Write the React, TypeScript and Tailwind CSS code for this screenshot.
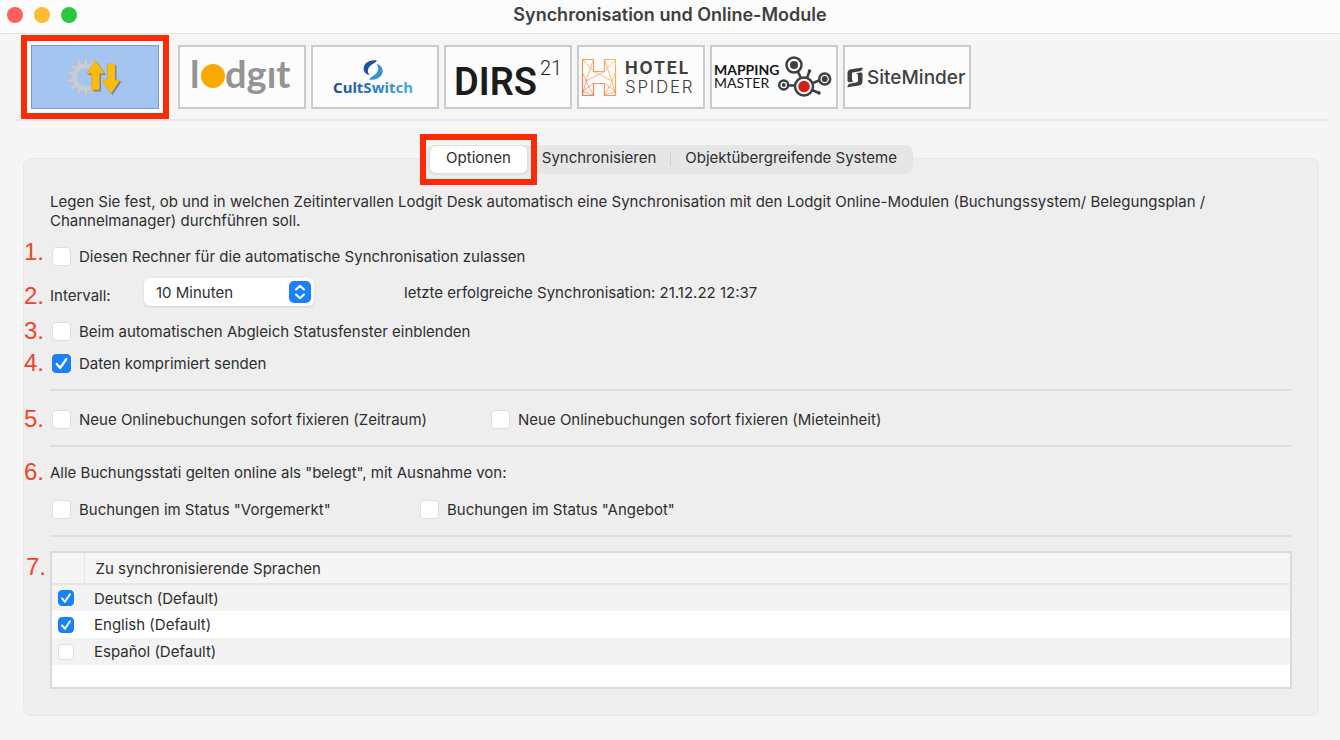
import React from 'react';

const GearArrows = () => {
  const teeth = Array.from({ length: 14 }, (_, i) => (i * 360) / 14);
  return (
    <svg viewBox="1 1 126 62" className="w-full h-full" aria-hidden="true">
      <g fill="#c9ccd2" stroke="#aeb4be" strokeWidth="0.5">
        {teeth.map((angle) => (
          <path key={angle} d="M52.8 19.5 L53.7 13.2 H56.3 L57.2 19.5 Z" transform={`rotate(${angle} 55 32)`} />
        ))}
      </g>
      <circle cx="55" cy="32" r="11.5" fill="none" stroke="#c9ccd2" strokeWidth="4.5" />
      <g fill="#4b5f80" opacity="0.6" transform="translate(1.5 1.5)">
        <path d="M64.500 15.500 L73.500 28.500 H68.500 V45 H60.500 V28.500 H55.500 Z" />
        <path d="M80 48.500 L71 35 H76.500 V19 H84 V35 H89 Z" />
      </g>
      <g fill="#fcbc0c" stroke="#c99a2a" strokeWidth="0.5">
        <path d="M64.500 15.500 L73.500 28.500 H68.500 V45 H60.500 V28.500 H55.500 Z" />
        <path d="M80 48.500 L71 35 H76.500 V19 H84 V35 H89 Z" />
      </g>
    </svg>
  );
};

const LodgitLogo = () => (
  <svg viewBox="2 2 124 60" className="w-full h-full font-['Lato',sans-serif] font-bold" fill="#949494">
    <text x="12" y="43" fontSize="38">l</text>
    <circle cx="35" cy="31" r="12" fill="#fba800" />
    <text x="47" y="43" fontSize="38">dgıt</text>
  </svg>
);

const CultSwitchLogo = () => (
  <svg viewBox="2 2 124 60" className="w-full h-full font-['Noto_Sans',sans-serif] font-bold">
    <defs>
      <linearGradient id="cult" x1="0" x2="1">
        <stop offset="0" stopColor="#1d4796" />
        <stop offset="0.45" stopColor="#2878bd" />
        <stop offset="1" stopColor="#49ade0" />
      </linearGradient>
    </defs>
    <path d="M66 15.500 C57 14 51 20 53 26 C54 28.500 56 29.500 58.500 30 C55.500 26 57 22 61 19.500 C63 18.200 65 17.500 66 15.500 Z" fill="#1f4f9f" />
    <path d="M58 34.500 C67 36 74 30 71 23 C70 20.500 68 19.500 65.500 19 C68.500 23 67.500 27 63.500 30 C61.500 31.500 59 32.500 58 34.500 Z" fill="#3793cf" />
    <text x="22" y="48" fontSize="15" fill="url(#cult)">CultSwitch</text>
  </svg>
);

const DirsLogo = () => (
  <svg viewBox="2 2 124 60" className="w-full h-full font-['Roboto',sans-serif]" fill="#1c1c1c">
    <text x="10" y="50" fontSize="38" className="font-semibold">DIRS</text>
    <text x="96" y="30" fontSize="20" className="font-light">21</text>
  </svg>
);

const HotelSpiderLogo = () => (
  <svg viewBox="2 2 124 60" className="w-full h-full font-['Inter',sans-serif]" fill="#3f3f41">
    <defs>
      <linearGradient id="spider" x1="0" y1="1" x2="1" y2="0">
        <stop offset="0" stopColor="#ee7a5a" />
        <stop offset="1" stopColor="#f8bf55" />
      </linearGradient>
    </defs>
    <g fill="none" stroke="url(#spider)">
      <path d="M5.500 14.500 H16.500 V26.500 H27.500 V14.500 H38.500 V50.500 H27.500 V38.500 H16.500 V50.500 H5.500 Z" strokeWidth="1.200" />
      <path
        d="M5.500 14.500 L16.500 26.500 M16.500 14.500 L9 36 L5.500 50.500 M9 36 L16.500 50.500 M9 36 L27.500 26.500 M9 36 L5.500 28 M16.500 38.500 L5.500 46 L16.500 50.500 M38.500 14.500 L27.500 26.500 M27.500 14.500 L35 36 L38.500 50.500 M35 36 L27.500 50.500 M35 36 L16.500 26.500 M35 36 L38.500 28 M27.500 38.500 L38.500 46 L27.500 50.500"
        strokeWidth="0.700"
      />
    </g>
    <text x="48" y="29" fontSize="17" className="font-bold tracking-widest">HOTEL</text>
    <text x="48" y="48" fontSize="17" className="font-light tracking-widest">SPIDER</text>
  </svg>
);

const MappingMasterLogo = () => (
  <svg viewBox="2 2 124 60" className="w-full h-full font-['Lato',sans-serif]" fill="#161616">
    <text x="4" y="30" fontSize="14" className="font-bold">MAPPING</text>
    <text x="4" y="43" fontSize="14">MASTER</text>
    <g stroke="#3d4043" strokeWidth="2.500" fill="none">
      <path d="M88 27 L91 33 M79 40.500 H84 M103 38 L109 35.500 M97 33 L99.500 26 M102 45 L109 48" />
      <circle cx="84" cy="20" r="7.500" />
      <circle cx="94" cy="41.500" r="9" />
      <circle cx="73.700" cy="40" r="4.500" />
      <circle cx="114.700" cy="34" r="5.500" />
    </g>
    <g fill="#3d4043">
      <circle cx="84" cy="20" r="4" />
      <circle cx="73.700" cy="40" r="2" />
      <circle cx="114.700" cy="34" r="3" />
      <circle cx="99.500" cy="26" r="1.800" />
      <circle cx="109" cy="48" r="1.800" />
    </g>
    <circle cx="94" cy="41.500" r="5.800" fill="#d0201a" />
  </svg>
);

const SiteMinderLogo = () => (
  <svg viewBox="2 2 124 60" className="w-full h-full font-['Inter',sans-serif]" fill="#404144">
    <path d="M19.500 22.500 L8 24.200 C5.500 24.600 4.500 26 4.500 28 V35 C4.500 36.500 5.200 37.300 7 37.200 L10.500 36.800 C9.500 36.300 9 35.500 9 34.500 V29 C9 28 9.300 27.500 10.500 27.300 L17 26.200 C19 25.800 19.500 24.500 19.500 22.500 Z" />
    <path d="M12.500 28.200 L17.500 27.500 C19 27.400 19.500 28 19.500 29.500 V36 C19.500 38.500 18.500 40 16 40.400 L4.500 42.200 C4.500 40 5.500 38.900 7.500 38.500 L13 37.600 C14.500 37.300 15 36.800 15 35.500 V30.500 C15 29.200 14.200 28.500 12.500 28.200 Z" />
    <text x="24" y="39" fontSize="19" className="font-medium">SiteMinder</text>
  </svg>
);

const modules = [
  { name: 'Lodgit', Logo: LodgitLogo },
  { name: 'CultSwitch', Logo: CultSwitchLogo },
  { name: 'DIRS21', Logo: DirsLogo },
  { name: 'Hotel Spider', Logo: HotelSpiderLogo },
  { name: 'Mapping Master', Logo: MappingMasterLogo },
  { name: 'SiteMinder', Logo: SiteMinderLogo },
];

const languages = [
  { id: 'de', name: 'Deutsch (Default)', checked: true },
  { id: 'en', name: 'English (Default)', checked: true },
  { id: 'es', name: 'Español (Default)', checked: false },
];

type TickProps = {
  id: string;
  checked?: boolean;
  small?: boolean;
};

const Tick: React.FC<TickProps> = ({ id, checked = false, small = false }) => (
  <span className={`grid shrink-0 ${small ? 'size-4' : 'size-[19px]'}`}>
    <input
      id={id}
      type="checkbox"
      defaultChecked={checked}
      className="peer [grid-area:1/1] size-full appearance-none rounded-[4px] border border-[#dfdfdf] bg-white checked:border-[#1a7df0] checked:bg-[#1a82f7]"
    />
    <svg
      viewBox="0 0 18 18"
      className="[grid-area:1/1] size-full pointer-events-none invisible peer-checked:visible"
      fill="none"
      stroke="white"
      strokeWidth="2.200"
      strokeLinecap="round"
      strokeLinejoin="round"
    >
      <path d="M4.500 9.500 L7.800 13.200 L13.500 4.800" />
    </svg>
  </span>
);

type OptionProps = {
  id: string;
  label: string;
  checked?: boolean;
  className?: string;
};

const Option: React.FC<OptionProps> = ({ id, label, checked, className = '' }) => (
  <div className={`flex items-center gap-2 pl-0.5 ${className}`}>
    <Tick id={id} checked={checked} />
    <label htmlFor={id}>{label}</label>
  </div>
);

type RowProps = {
  step?: string;
  align?: string;
  className?: string;
  children: React.ReactNode;
};

const Row: React.FC<RowProps> = ({ step, align = 'self-center', className = '', children }) => (
  <div className={`flex min-h-7 ${className}`}>
    <span className={`w-[26px] shrink-0 font-['Liberation_Sans',sans-serif] text-2xl leading-5 text-[#f0452a] ${align}`}>
      {step}
    </span>
    {children}
  </div>
);

const Divider = () => <hr className="ml-[26px] mt-3 border-t-2 border-[#dedede]" />;

const App: React.FC = () => {
  return (
    <div className="min-h-screen bg-[#f5f5f5] pb-6 font-['Inter',sans-serif] text-[15px] leading-[19px] text-[#2e2e2e]">
      <header className="grid h-[34px] grid-cols-[1fr_auto_1fr] items-center border-b border-[#e2e2e2] bg-[#fcfcfc] pb-1">
        <div className="flex gap-[11px] pl-[7px]">
          <button aria-label="Schließen" className="size-4 rounded-full bg-[#fe605b]" />
          <button aria-label="Minimieren" className="size-4 rounded-full bg-[#fdbd30]" />
          <button aria-label="Maximieren" className="size-4 rounded-full bg-[#27c840]" />
        </div>
        <h1 className="text-lg leading-5 font-semibold text-[#404040]">Synchronisation und Online-Module</h1>
      </header>

      <nav className="ml-[14px] mr-3 flex items-center border-b-2 border-[#e8e8e8] pl-[7px] pt-px">
        <div className="mr-[9px] border-6 border-[#fa2b0a] bg-[#fcfcfc] p-1">
          <button aria-label="Synchronisation" className="block h-16 w-32 border border-[#7f9cc4] bg-[#a3c5ef]">
            <GearArrows />
          </button>
        </div>
        <div className="flex gap-[5px]">
          {modules.map(({ name, Logo }) => (
            <button key={name} aria-label={name} className="h-16 w-32 border-2 border-[#cbcbcb] bg-[#fcfcfc]">
              <Logo />
            </button>
          ))}
        </div>
      </nav>

      <div className="relative z-10 mt-6 -mb-4 flex justify-center">
        <div role="tablist" className="relative flex h-[29px] rounded-lg bg-[#e6e6e6] px-0.5 text-[#2e2e2e]">
          <button role="tab" aria-selected="true" className="rounded-[7px] border border-[#dddddd] bg-white px-4 pb-1 shadow-xs">
            Optionen
          </button>
          <button role="tab" aria-selected="false" className="px-3.5 pb-1">
            Synchronisieren
          </button>
          <span className="my-2 w-px bg-[#d0d0d0]" />
          <button role="tab" aria-selected="false" className="px-3.5 pb-1">
            Objektübergreifende Systeme
          </button>
          <div className="pointer-events-none absolute -left-[7px] -top-[11px] h-[51px] w-[117px] border-6 border-[#fa2b0a]" />
        </div>
      </div>

      <main className="ml-[23px] mr-[21px] rounded-lg border border-[#e8e8e8] bg-[#eeeeee] pb-[26px] pr-[26px] pt-[33px]">
        <p className="ml-[26px] pr-16">
          Legen Sie fest, ob und in welchen Zeitintervallen Lodgit Desk automatisch eine Synchronisation mit den Lodgit
          Online-Modulen (Buchungssystem/ Belegungsplan / Channelmanager) durchführen soll.
        </p>

        <Row step="1." align="self-start" className="mt-3">
          <Option id="auto-sync" label="Diesen Rechner für die automatische Synchronisation zulassen" />
        </Row>

        <Row step="2." align="self-end" className="mt-2">
          <label htmlFor="interval" className="w-[94px] self-end leading-5">
            Intervall:
          </label>
          <div className="grid w-[170px] items-center rounded-md bg-white shadow-sm">
            <select id="interval" className="[grid-area:1/1] h-7 w-full appearance-none pl-3">
              <option>10 Minuten</option>
            </select>
            <span className="[grid-area:1/1] pointer-events-none mr-[3px] size-[22px] justify-self-end rounded-[5px] bg-[#1a82f7]">
              <svg
                viewBox="0 0 22 22"
                fill="none"
                stroke="white"
                strokeWidth="2"
                strokeLinecap="round"
                strokeLinejoin="round"
              >
                <path d="M7 8.500 L11 4.800 L15 8.500 M7 13.500 L11 17.200 L15 13.500" />
              </svg>
            </span>
          </div>
          <span className="ml-[90px] self-center">letzte erfolgreiche Synchronisation: 21.12.22 12:37</span>
        </Row>

        <Row step="3." className="mt-[11px]">
          <Option id="status-window" label="Beim automatischen Abgleich Statusfenster einblenden" />
        </Row>
        <Row step="4." className="mt-1">
          <Option id="compress" label="Daten komprimiert senden" checked />
        </Row>

        <Divider />

        <Row step="5." className="mt-[14px]">
          <Option id="fix-period" label="Neue Onlinebuchungen sofort fixieren (Zeitraum)" className="w-[439px]" />
          <Option id="fix-unit" label="Neue Onlinebuchungen sofort fixieren (Mieteinheit)" />
        </Row>

        <Divider />

        <Row step="6." className="mt-[11px]">
          <p className="self-center">Alle Buchungsstati gelten online als "belegt", mit Ausnahme von:</p>
        </Row>
        <Row className="mt-[9px]">
          <Option id="reserved" label='Buchungen im Status "Vorgemerkt"' className="w-[368px]" />
          <Option id="offer" label='Buchungen im Status "Angebot"' />
        </Row>

        <Divider />

        <Row step="7." align="self-start pl-0.5 mt-1.5" className="mt-[14px]">
          <div className="flex-1 border-2 border-[#dadada] bg-white pb-[22px]">
            <table className="w-full text-left">
              <thead>
                <tr className="h-[31px] border-b-2 border-[#e6e6e6] bg-[#f5f5f5]">
                  <th className="w-8 border-r border-[#e6e6e6]" aria-label="Aktiv" />
                  <th className="pl-[11px] font-normal">Zu synchronisierende Sprachen</th>
                </tr>
              </thead>
              <tbody>
                {languages.map((language) => (
                  <tr key={language.id} className="h-[27px] odd:bg-[#f3f3f3]">
                    <td className="pl-1.5">
                      <Tick id={language.id} checked={language.checked} small />
                    </td>
                    <td className="pl-[10px]">
                      <label htmlFor={language.id}>{language.name}</label>
                    </td>
                  </tr>
                ))}
              </tbody>
            </table>
          </div>
        </Row>
      </main>
    </div>
  );
};

export default App;
